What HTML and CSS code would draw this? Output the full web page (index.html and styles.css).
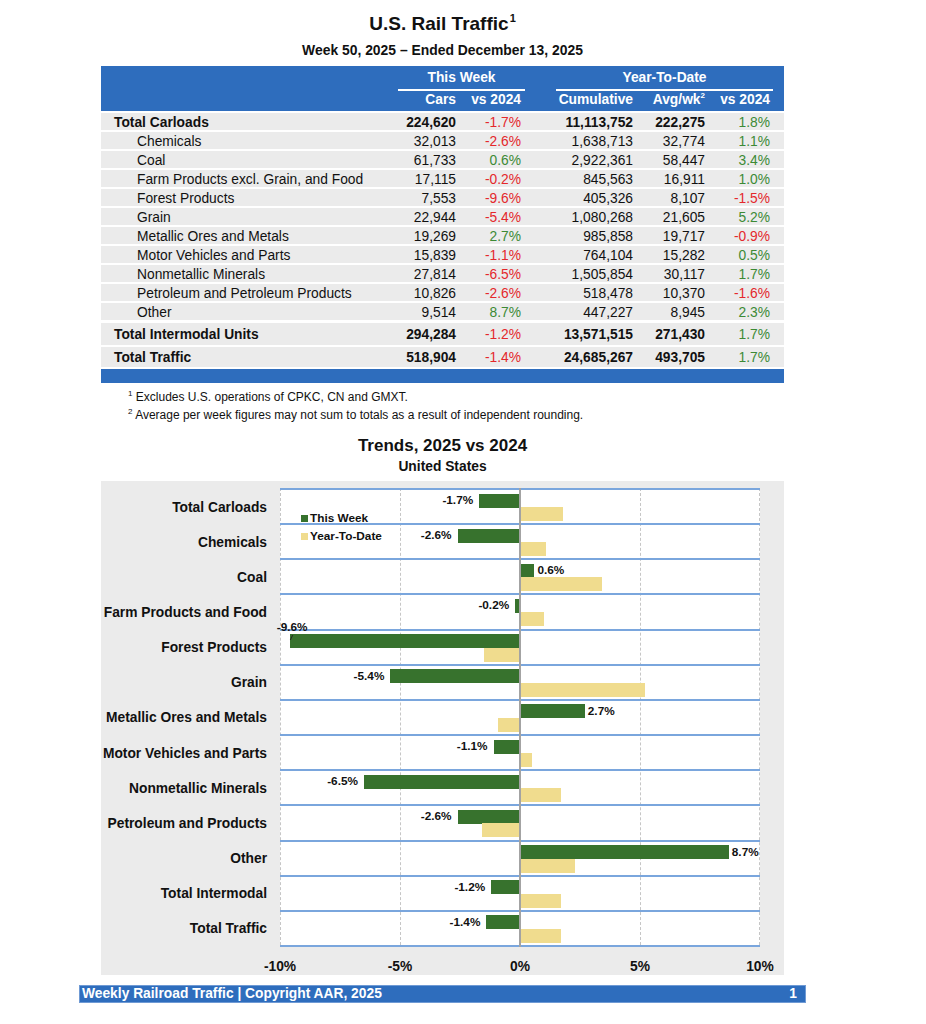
FILE: index.html
```html
<!DOCTYPE html>
<html lang="en">
<head>
<meta charset="utf-8">
<title>U.S. Rail Traffic</title>
<link rel="stylesheet" href="styles.css">
</head>
<body>
<div class="page">
  <div class="sheet">
    <h1 class="title">U.S. Rail Traffic<sup>1</sup></h1>
    <div class="subtitle">Week 50, 2025 – Ended December 13, 2025</div>

    <section class="traffic">
      <div class="thead">
        <div class="hrow hrow-groups">
          <div class="grp grp-week">This Week</div>
          <div class="grp grp-ytd">Year-To-Date</div>
        </div>
        <div class="hrow hrow-cols">
          <div class="hc c2">Cars</div>
          <div class="hc c3">vs 2024</div>
          <div class="hc c4">Cumulative</div>
          <div class="hc c5">Avg/wk<sup>2</sup></div>
          <div class="hc c6">vs 2024</div>
        </div>
      </div>

      <div class="row total"><div class="lbl">Total Carloads</div><div class="num">224,620</div><div class="pct neg">-1.7%</div><div class="num">11,113,752</div><div class="num">222,275</div><div class="pct pos">1.8%</div></div>
      <div class="row"><div class="lbl">Chemicals</div><div class="num">32,013</div><div class="pct neg">-2.6%</div><div class="num">1,638,713</div><div class="num">32,774</div><div class="pct pos">1.1%</div></div>
      <div class="row"><div class="lbl">Coal</div><div class="num">61,733</div><div class="pct pos">0.6%</div><div class="num">2,922,361</div><div class="num">58,447</div><div class="pct pos">3.4%</div></div>
      <div class="row"><div class="lbl">Farm Products excl. Grain, and Food</div><div class="num">17,115</div><div class="pct neg">-0.2%</div><div class="num">845,563</div><div class="num">16,911</div><div class="pct pos">1.0%</div></div>
      <div class="row"><div class="lbl">Forest Products</div><div class="num">7,553</div><div class="pct neg">-9.6%</div><div class="num">405,326</div><div class="num">8,107</div><div class="pct neg">-1.5%</div></div>
      <div class="row"><div class="lbl">Grain</div><div class="num">22,944</div><div class="pct neg">-5.4%</div><div class="num">1,080,268</div><div class="num">21,605</div><div class="pct pos">5.2%</div></div>
      <div class="row"><div class="lbl">Metallic Ores and Metals</div><div class="num">19,269</div><div class="pct pos">2.7%</div><div class="num">985,858</div><div class="num">19,717</div><div class="pct neg">-0.9%</div></div>
      <div class="row"><div class="lbl">Motor Vehicles and Parts</div><div class="num">15,839</div><div class="pct neg">-1.1%</div><div class="num">764,104</div><div class="num">15,282</div><div class="pct pos">0.5%</div></div>
      <div class="row"><div class="lbl">Nonmetallic Minerals</div><div class="num">27,814</div><div class="pct neg">-6.5%</div><div class="num">1,505,854</div><div class="num">30,117</div><div class="pct pos">1.7%</div></div>
      <div class="row"><div class="lbl">Petroleum and Petroleum Products</div><div class="num">10,826</div><div class="pct neg">-2.6%</div><div class="num">518,478</div><div class="num">10,370</div><div class="pct neg">-1.6%</div></div>
      <div class="row"><div class="lbl">Other</div><div class="num">9,514</div><div class="pct pos">8.7%</div><div class="num">447,227</div><div class="num">8,945</div><div class="pct pos">2.3%</div></div>
      <div class="row total big"><div class="lbl">Total Intermodal Units</div><div class="num">294,284</div><div class="pct neg">-1.2%</div><div class="num">13,571,515</div><div class="num">271,430</div><div class="pct pos">1.7%</div></div>
      <div class="row total tt"><div class="lbl">Total Traffic</div><div class="num">518,904</div><div class="pct neg">-1.4%</div><div class="num">24,685,267</div><div class="num">493,705</div><div class="pct pos">1.7%</div></div>
      <div class="band"></div>
    </section>

    <div class="notes">
      <p><sup>1</sup> Excludes U.S. operations of CPKC, CN and GMXT.</p>
      <p><sup>2</sup> Average per week figures may not sum to totals as a result of independent rounding.</p>
    </div>

    <h2 class="chart-title">Trends, 2025 vs 2024</h2>
    <div class="chart-sub">United States</div>

    <div class="chart">
      <div class="cats">
        <div class="cat">Total Carloads</div>
        <div class="cat">Chemicals</div>
        <div class="cat">Coal</div>
        <div class="cat">Farm Products and Food</div>
        <div class="cat">Forest Products</div>
        <div class="cat">Grain</div>
        <div class="cat">Metallic Ores and Metals</div>
        <div class="cat">Motor Vehicles and Parts</div>
        <div class="cat">Nonmetallic Minerals</div>
        <div class="cat">Petroleum and Products</div>
        <div class="cat">Other</div>
        <div class="cat">Total Intermodal</div>
        <div class="cat">Total Traffic</div>
      </div>

      <div class="plot">
        <div class="gv gv-0"></div>
        <div class="gv gv-1"></div>
        <div class="gv gv-3"></div>
        <div class="gv gv-4"></div>
        <div class="zero"></div>

        <div class="legend">
          <div class="lg"><span class="sw sw-tw"></span>This Week</div>
          <div class="lg"><span class="sw sw-ytd"></span>Year-To-Date</div>
        </div>

        <div class="prow">
          <div class="track tw"><div class="hn"><span class="vl">-1.7%</span><i class="bar" style="--v:1.7"></i></div><div class="hp"></div></div>
          <div class="track ytd"><div class="hn"></div><div class="hp"><i class="bar" style="--v:1.8"></i></div></div>
        </div>
        <div class="prow">
          <div class="track tw"><div class="hn"><span class="vl">-2.6%</span><i class="bar" style="--v:2.6"></i></div><div class="hp"></div></div>
          <div class="track ytd"><div class="hn"></div><div class="hp"><i class="bar" style="--v:1.1"></i></div></div>
        </div>
        <div class="prow">
          <div class="track tw"><div class="hn"></div><div class="hp"><i class="bar" style="--v:0.6"></i><span class="vl">0.6%</span></div></div>
          <div class="track ytd"><div class="hn"></div><div class="hp"><i class="bar" style="--v:3.4"></i></div></div>
        </div>
        <div class="prow">
          <div class="track tw"><div class="hn"><span class="vl">-0.2%</span><i class="bar" style="--v:0.2"></i></div><div class="hp"></div></div>
          <div class="track ytd"><div class="hn"></div><div class="hp"><i class="bar" style="--v:1.0"></i></div></div>
        </div>
        <div class="prow">
          <div class="track tw"><div class="hn"><span class="vl vl-up">-9.6%</span><i class="bar bar-lead" style="--v:9.6"></i></div><div class="hp"></div></div>
          <div class="track ytd"><div class="hn"><i class="bar" style="--v:1.5"></i></div><div class="hp"></div></div>
        </div>
        <div class="prow">
          <div class="track tw"><div class="hn"><span class="vl">-5.4%</span><i class="bar" style="--v:5.4"></i></div><div class="hp"></div></div>
          <div class="track ytd"><div class="hn"></div><div class="hp"><i class="bar" style="--v:5.2"></i></div></div>
        </div>
        <div class="prow">
          <div class="track tw"><div class="hn"></div><div class="hp"><i class="bar" style="--v:2.7"></i><span class="vl">2.7%</span></div></div>
          <div class="track ytd"><div class="hn"><i class="bar" style="--v:0.9"></i></div><div class="hp"></div></div>
        </div>
        <div class="prow">
          <div class="track tw"><div class="hn"><span class="vl">-1.1%</span><i class="bar" style="--v:1.1"></i></div><div class="hp"></div></div>
          <div class="track ytd"><div class="hn"></div><div class="hp"><i class="bar" style="--v:0.5"></i></div></div>
        </div>
        <div class="prow">
          <div class="track tw"><div class="hn"><span class="vl">-6.5%</span><i class="bar" style="--v:6.5"></i></div><div class="hp"></div></div>
          <div class="track ytd"><div class="hn"></div><div class="hp"><i class="bar" style="--v:1.7"></i></div></div>
        </div>
        <div class="prow">
          <div class="track tw"><div class="hn"><span class="vl">-2.6%</span><i class="bar" style="--v:2.6"></i></div><div class="hp"></div></div>
          <div class="track ytd"><div class="hn"><i class="bar" style="--v:1.6"></i></div><div class="hp"></div></div>
        </div>
        <div class="prow">
          <div class="track tw"><div class="hn"></div><div class="hp"><i class="bar" style="--v:8.7"></i><span class="vl">8.7%</span></div></div>
          <div class="track ytd"><div class="hn"></div><div class="hp"><i class="bar" style="--v:2.3"></i></div></div>
        </div>
        <div class="prow">
          <div class="track tw"><div class="hn"><span class="vl">-1.2%</span><i class="bar" style="--v:1.2"></i></div><div class="hp"></div></div>
          <div class="track ytd"><div class="hn"></div><div class="hp"><i class="bar" style="--v:1.7"></i></div></div>
        </div>
        <div class="prow">
          <div class="track tw"><div class="hn"><span class="vl">-1.4%</span><i class="bar" style="--v:1.4"></i></div><div class="hp"></div></div>
          <div class="track ytd"><div class="hn"></div><div class="hp"><i class="bar" style="--v:1.7"></i></div></div>
        </div>
      </div>

      <div class="axis">
        <span class="tick">-10%</span>
        <span class="tick">-5%</span>
        <span class="tick">0%</span>
        <span class="tick">5%</span>
        <span class="tick">10%</span>
      </div>
    </div>
  </div>

  <footer class="footer">
    <span>Weekly Railroad Traffic | Copyright AAR, 2025</span>
    <span>1</span>
  </footer>
</div>
</body>
</html>
```

FILE: styles.css
```css
* { box-sizing: border-box; }

body {
  margin: 0;
  background: #fff;
  color: #111;
  font-family: "Liberation Sans", Arial, sans-serif;
}

.page {
  width: 926px;
  height: 1024px;
  overflow: hidden;
}

.sheet {
  margin-left: 101px;
  width: 683px;
  padding-top: 12px;
}

.title {
  margin: 0;
  text-align: center;
  font-size: 19px;
  line-height: 24px;
  font-weight: bold;
}

.title sup {
  font-size: 11px;
  line-height: 0;
  vertical-align: 8px;
  margin-left: 1px;
}

.subtitle {
  margin-top: 5px;
  text-align: center;
  font-size: 13.9px;
  line-height: 18px;
  font-weight: bold;
}

/* ---------- table ---------- */
.traffic {
  margin-top: 7px;
  font-size: 13.8px;
}

.thead {
  background: #2e6dbd;
  color: #fff;
  font-weight: bold;
  height: 45px;
}

.hrow,
.row {
  display: grid;
  grid-template-columns: 290px 65px 65px 112px 72px 65px 14px;
}

.hrow-groups { height: 24px; }

.grp {
  text-align: center;
  line-height: 23px;
  border-bottom: 2px solid #fff;
}

.grp-week {
  grid-column: 2 / 4;
  margin-left: 7px;
  margin-right: -4px;
}

.grp-ytd {
  grid-column: 4 / 7;
  margin-left: 35px;
  margin-right: -3px;
}

.hrow-cols {
  height: 21px;
  line-height: 20px;
}

.hc { text-align: right; white-space: nowrap; }
.c2 { grid-column: 2; }
.c3 { grid-column: 3; }
.c4 { grid-column: 4; }
.c5 { grid-column: 5; }
.c6 { grid-column: 6; }

.hc sup {
  font-size: 8px;
  line-height: 0;
  vertical-align: 6px;
}

.row {
  margin-top: 2px;
  height: 17px;
  line-height: 19px;
  background: #ebebeb;
}

.row .lbl {
  padding-left: 36px;
  white-space: nowrap;
}

.row.total .lbl {
  padding-left: 13px;
  font-weight: bold;
}

.row.total .num { font-weight: bold; }

.num, .pct { text-align: right; white-space: nowrap; }

.pct.neg { color: #e4282b; }
.pct.pos { color: #3c8a35; }

.row.big {
  margin-top: 3px;
  height: 22px;
  line-height: 23px;
}

.row.tt {
  height: 20px;
  line-height: 21px;
}

.band {
  margin-top: 2px;
  height: 14px;
  background: #2e6dbd;
}

/* ---------- notes ---------- */
.notes {
  margin-top: 5px;
  padding-left: 27px;
  font-size: 12px;
  line-height: 18px;
}

.notes p { margin: 0; }

.notes sup {
  font-size: 8px;
  line-height: 0;
  vertical-align: 5px;
}

/* ---------- chart ---------- */
.chart-title {
  margin: 11px 0 0;
  text-align: center;
  font-size: 17px;
  line-height: 22px;
  font-weight: bold;
}

.chart-sub {
  text-align: center;
  font-size: 13.8px;
  line-height: 20px;
  font-weight: bold;
}

.chart {
  margin-top: 4px;
  height: 494px;
  padding-top: 7px;
  background: #ebebeb;
  display: grid;
  grid-template-columns: 179px 480px 24px;
  grid-template-rows: 459px 28px;
}

.cats {
  grid-column: 1;
  grid-row: 1;
  display: grid;
  grid-template-rows: repeat(13, 1fr);
  padding-top: 2px;
  padding-bottom: 1px;
}

.cat {
  display: flex;
  align-items: center;
  justify-content: flex-end;
  padding-right: 13px;
  font-size: 13.8px;
  font-weight: bold;
  white-space: nowrap;
}

.plot {
  grid-column: 2;
  grid-row: 1;
  position: relative;
  background: #fff;
  border-bottom: 2px solid #7aa6dd;
  display: grid;
  grid-template-rows: repeat(13, 1fr);
}

.gv {
  position: absolute;
  top: 0;
  bottom: 0;
  width: 0;
  border-left: 1px dashed #c6c6c6;
  z-index: 0;
}
.gv-0 { left: 0; }
.gv-1 { left: 120px; }
.gv-3 { left: 360px; }
.gv-4 { left: 479px; }

.zero {
  position: absolute;
  top: 0;
  bottom: -2px;
  left: 239px;
  width: 2px;
  background: #a3a3a3;
  z-index: 3;
}

.prow {
  position: relative;
  z-index: 1;
  border-top: 2px solid #7aa6dd;
  padding-top: 3px;
}

.track {
  display: grid;
  grid-template-columns: 240px 240px;
  height: 14px;
}

.hn {
  display: flex;
  justify-content: flex-end;
  align-items: center;
}

.hp {
  display: flex;
  align-items: center;
}

.bar {
  display: block;
  flex: none;
  height: 14px;
  width: calc(var(--v) * 24px);
}

.tw .bar { background: #37722d; }
.ytd .bar { background: #f0dc8e; }

.vl {
  flex: none;
  font-size: 11.8px;
  font-weight: bold;
  line-height: 15px;
  white-space: nowrap;
}

.hn .vl { padding-right: 6px; }
.hp .vl { padding-left: 3px; }

.vl-up {
  position: relative;
  left: 24px;
  top: -14px;
}

.bar-lead { position: relative; }
.bar-lead::before {
  content: "";
  position: absolute;
  left: 1px;
  top: 1px;
  width: 1px;
  height: 5px;
  background: #222;
  transform: skewX(-25deg);
}

.legend {
  position: absolute;
  left: 21px;
  top: 21px;
  z-index: 4;
  font-size: 11.8px;
  font-weight: bold;
  line-height: 18px;
}

.lg {
  display: flex;
  align-items: center;
  white-space: nowrap;
}

.sw {
  display: inline-block;
  width: 7px;
  height: 7px;
  margin-right: 2px;
}
.sw-tw { background: #37722d; }
.sw-ytd { background: #f0dc8e; }

.axis {
  grid-column: 2;
  grid-row: 2;
  display: flex;
  justify-content: space-between;
  padding-top: 11px;
  font-size: 13.8px;
  font-weight: bold;
  line-height: 18px;
}

.tick {
  width: 0;
  display: flex;
  justify-content: center;
  white-space: nowrap;
}

/* ---------- footer ---------- */
.footer {
  margin: 10px 0 0 79px;
  width: 727px;
  height: 18px;
  background: #2e6dbd;
  border: 1px solid #6f9ad4;
  color: #fff;
  font-size: 13.8px;
  font-weight: bold;
  line-height: 16px;
  display: flex;
  justify-content: space-between;
  padding: 0 8px 0 2px;
}
```
